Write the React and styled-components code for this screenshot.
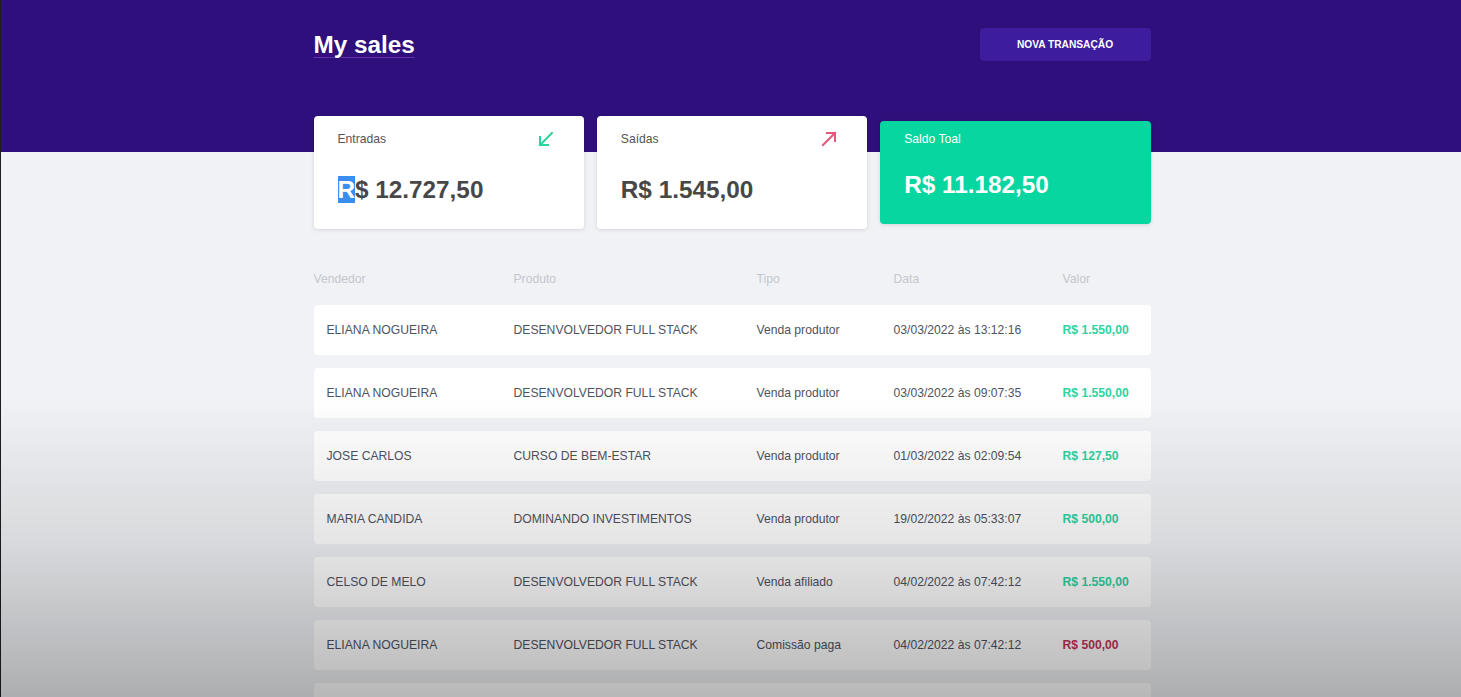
import React from 'react';
import styled, { createGlobalStyle } from 'styled-components';

// base page styles
const GlobalStyle = createGlobalStyle`
  * { box-sizing: border-box; }
  body {
    margin: 0;
    background: #f0f2f5;
    font-family: "Liberation Sans", Arial, sans-serif;
    font-size: 12.16px;
    color: #4f5360;
  }
`;

const Page = styled.div`
  min-height: 697px;
  border-left: 1px solid #1e1e24;
  position: relative;
  overflow: hidden;
`;

// video fade that darkens the lower part of the frame
const Fade = styled.div`
  position: fixed;
  inset: 0;
  pointer-events: none;
  background: linear-gradient(
    to bottom,
    rgba(0, 0, 0, 0) 0%,
    rgba(0, 0, 0, 0) 57%,
    rgba(0, 0, 0, 0.1) 78%,
    rgba(0, 0, 0, 0.28) 100%
  );
`;

const Header = styled.header`
  background: #2f0f7b;
  height: 152px;
`;

const Container = styled.div`
  width: 837px;
  margin: 0 auto;
  position: relative;
  left: 1px;
`;

const TopBar = styled(Container)`
  display: flex;
  align-items: center;
  justify-content: space-between;
  padding-top: 28px;
`;

const Title = styled.h1`
  margin: 0;
  font-size: 24.3px;
  font-weight: 700;
  color: #ffffff;
  text-decoration: underline;
  text-decoration-color: #6a2cb0;
  text-decoration-thickness: 1px;
  text-underline-offset: 4px;
`;

const NewButton = styled.button`
  width: 171px;
  height: 33px;
  border: none;
  border-radius: 4px;
  background: #3d1c9e;
  color: #ffffff;
  font-family: "Liberation Sans", Arial, sans-serif;
  font-size: 10.2px;
  font-weight: 700;
  cursor: pointer;
`;

const Summary = styled(Container)`
  display: grid;
  grid-template-columns: repeat(3, 1fr);
  gap: 13px;
  margin-top: -36px;
  align-items: start;
`;

const Card = styled.div`
  height: ${({ $highlight }) => ($highlight ? '103px' : '113px')};
  margin-top: ${({ $highlight }) => ($highlight ? '5px' : '0')};
  padding: ${({ $highlight }) => ($highlight ? '11px 30px 0 24px' : '16px 30px 0 24px')};
  border-radius: 4px;
  background: ${({ $highlight }) => ($highlight ? '#08d6a0' : '#ffffff')};
  color: ${({ $highlight }) => ($highlight ? '#ffffff' : '#474747')};
  box-shadow: 0 1px 4px rgba(0, 0, 0, 0.12);
`;

const CardHead = styled.div`
  display: flex;
  align-items: center;
  justify-content: space-between;
  height: 14px;
  font-size: 12.16px;
  color: ${({ $light }) => ($light ? '#ffffff' : '#555555')};
`;

const CardValue = styled.strong`
  display: block;
  margin-top: ${({ $tight }) => ($tight ? '25px' : '30px')};
  font-size: 24.3px;
  line-height: 28px;
  font-weight: 700;
`;

const Selected = styled.span`
  background: #3a8ef0;
  color: #ffffff;
`;

const Table = styled(Container)`
  margin-top: 43px;
`;

const Grid = styled.div`
  display: grid;
  grid-template-columns: 200px 243px 137px 169px 1fr;
  align-items: center;
`;

const HeadRow = styled(Grid)`
  color: #c4c7ce;
  height: 14px;
  margin-bottom: 19px;
`;

const Rows = styled.div`
  display: flex;
  flex-direction: column;
  gap: 13px;
`;

const Row = styled(Grid)`
  height: 50px;
  background: #ffffff;
  border-radius: 4px;
  color: #4f5360;

  & > span:first-child {
    padding-left: 13px;
  }
`;

const Amount = styled.span`
  font-weight: 700;
  color: ${({ $out }) => ($out ? '#c8325a' : '#2fd3a0')};
`;

const Arrow = ({ up, color }) => (
  <svg width="16" height="16" viewBox="0 0 16 16" fill="none" stroke={color} strokeWidth="2" strokeLinecap="square">
    {up ? (
      <>
        <path d="M2 14 L14 2" />
        <path d="M6 2 H14 V10" />
      </>
    ) : (
      <>
        <path d="M14 2 L2 14" />
        <path d="M2 6 V14 H10" />
      </>
    )}
  </svg>
);

const sales = [
  ['ELIANA NOGUEIRA', 'DESENVOLVEDOR FULL STACK', 'Venda produtor', '03/03/2022 às 13:12:16', 'R$ 1.550,00', false],
  ['ELIANA NOGUEIRA', 'DESENVOLVEDOR FULL STACK', 'Venda produtor', '03/03/2022 às 09:07:35', 'R$ 1.550,00', false],
  ['JOSE CARLOS', 'CURSO DE BEM-ESTAR', 'Venda produtor', '01/03/2022 às 02:09:54', 'R$ 127,50', false],
  ['MARIA CANDIDA', 'DOMINANDO INVESTIMENTOS', 'Venda produtor', '19/02/2022 às 05:33:07', 'R$ 500,00', false],
  ['CELSO DE MELO', 'DESENVOLVEDOR FULL STACK', 'Venda afiliado', '04/02/2022 às 07:42:12', 'R$ 1.550,00', false],
  ['ELIANA NOGUEIRA', 'DESENVOLVEDOR FULL STACK', 'Comissão paga', '04/02/2022 às 07:42:12', 'R$ 500,00', true],
  ['CELSO DE MELO', 'DESENVOLVEDOR FULL STACK', 'Comissão recebida', '04/02/2022 às 07:42:12', 'R$ 500,00', false],
];

export default function App() {
  return (
    <Page>
      <GlobalStyle />
      <Header>
        <TopBar>
          <Title>My sales</Title>
          <NewButton>NOVA TRANSAÇÃO</NewButton>
        </TopBar>
      </Header>

      <Summary>
        <Card>
          <CardHead>
            <span>Entradas</span>
            <Arrow color="#2fd3a0" />
          </CardHead>
          <CardValue><Selected>R</Selected>$ 12.727,50</CardValue>
        </Card>
        <Card>
          <CardHead>
            <span>Saídas</span>
            <Arrow up color="#e0587a" />
          </CardHead>
          <CardValue>R$ 1.545,00</CardValue>
        </Card>
        <Card $highlight>
          <CardHead $light>
            <span>Saldo Toal</span>
          </CardHead>
          <CardValue $tight>R$ 11.182,50</CardValue>
        </Card>
      </Summary>

      <Table>
        <HeadRow>
          <span>Vendedor</span>
          <span>Produto</span>
          <span>Tipo</span>
          <span>Data</span>
          <span>Valor</span>
        </HeadRow>
        <Rows>
          {sales.map(([seller, product, type, date, value, out], i) => (
            <Row key={i}>
              <span>{seller}</span>
              <span>{product}</span>
              <span>{type}</span>
              <span>{date}</span>
              <Amount $out={out}>{value}</Amount>
            </Row>
          ))}
        </Rows>
      </Table>
      <Fade />
    </Page>
  );
}
